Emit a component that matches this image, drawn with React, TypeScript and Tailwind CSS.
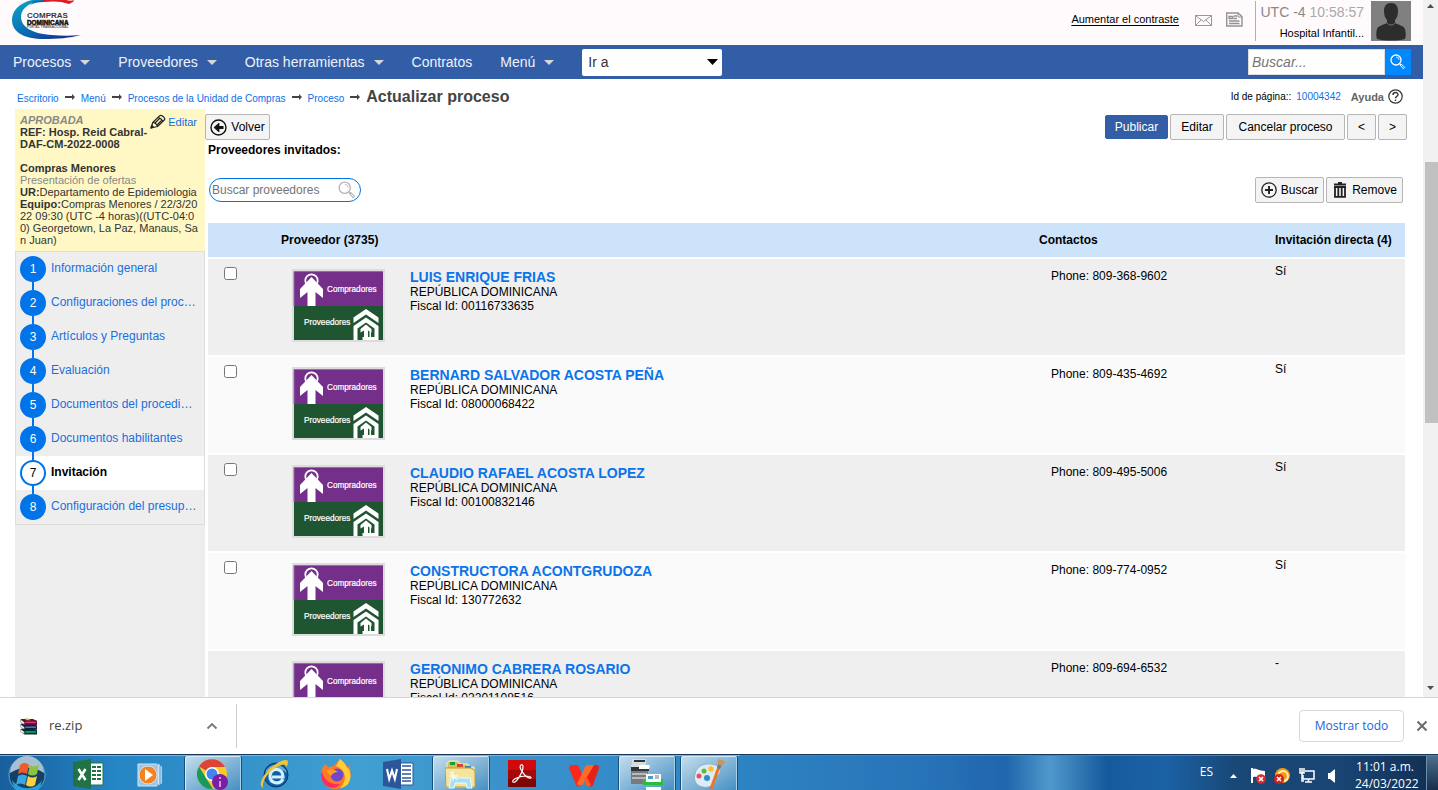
import React, { useState } from "react";
import type { ReactNode } from "react";

const steps = [
  "Información general",
  "Configuraciones del proc…",
  "Artículos y Preguntas",
  "Evaluación",
  "Documentos del procedi…",
  "Documentos habilitantes",
  "Invitación",
  "Configuración del presup…",
];

const suppliers = [
  { name: "LUIS ENRIQUE FRIAS", id: "00116733635", phone: "809-368-9602", direct: true },
  { name: "BERNARD SALVADOR ACOSTA PEÑA", id: "08000068422", phone: "809-435-4692", direct: true },
  { name: "CLAUDIO RAFAEL ACOSTA LOPEZ", id: "00100832146", phone: "809-495-5006", direct: true },
  { name: "CONSTRUCTORA ACONTGRUDOZA", id: "130772632", phone: "809-774-0952", direct: true },
  { name: "GERONIMO CABRERA ROSARIO", id: "02201108516", phone: "809-694-6532", direct: false },
];

const crumbs = ["Escritorio", "Menú", "Procesos de la Unidad de Compras", "Proceso"];

function Logo() {
  return (
    <svg width="70" height="40" viewBox="0 0 70 40" role="img" aria-label="Compras Dominicana">
      <defs>
        <linearGradient id="swoosh" x1="0" y1="0" x2="1" y2="1">
          <stop offset="0" stopColor="#0aa9cb" />
          <stop offset="0.55" stopColor="#0a66b0" />
          <stop offset="1" stopColor="#1b1c7c" />
        </linearGradient>
      </defs>
      <path d="M20 0C7 3 0 11 0 20c0 12 12 19 32 19 14 0 25-1 37-4-10 1-20 1-29 0C21 34 9 27 9 17 9 10 14 4 29 0Z" fill="url(#swoosh)" />
      <path d="M21 2C25 0 29 0 32 0v2c-6 0-11 1-14 3Z" fill="#0b66ab" />
      <path d="M32 0h22c3 1 6 1 8 0l-1 2-4 2C49 1 40 1 32 2Z" fill="#e01b22" />
      <text x="15" y="18" fontSize="8" fontWeight="700" fill="#38383c" fontFamily="Liberation Sans, sans-serif">COMPRAS</text>
      <text x="15" y="24.500" fontSize="6.4" fontWeight="900" fill="#141416" stroke="#141416" strokeWidth="0.5" fontFamily="Liberation Sans, sans-serif">DOMINICANA</text>
      <text x="15" y="28" fontSize="3.2" fontWeight="700" fill="#555" fontFamily="Liberation Sans, sans-serif">PORTAL TRANSACCIONAL</text>
    </svg>
  );
}

function Caret() {
  return (
    <svg width="10" height="5" viewBox="0 0 10 5" aria-hidden="true">
      <path d="M0 0h10L5 5Z" fill="#d6d6d6" />
    </svg>
  );
}

function Arrow() {
  return (
    <svg width="10" height="6" viewBox="0 0 10 6" aria-hidden="true">
      <path d="M0 2h7V0l3 3-3 3V4H0Z" fill="#444" />
    </svg>
  );
}

function Magnifier({ color, size }: { color: string; size: number }) {
  return (
    <svg width={size} height={size} viewBox="0 0 16 16" className="shrink-0" fill="none" stroke={color} aria-hidden="true">
      <circle cx="6" cy="6" r="5" strokeWidth="1.3" />
      <path d="M6 3a3 3 0 0 1 3 3" strokeWidth="0.8" />
      <path d="m9.6 9.6 1.6 1.600" strokeWidth="1.2" />
      <path d="m11.200 10.200 3.600 3.200-1.400 1.400-3.200-3.600Z" strokeWidth="1" strokeLinejoin="round" />
    </svg>
  );
}

function ProviderImage() {
  return (
    <svg width="93" height="73" viewBox="0 0 93 73" className="shrink-0" aria-hidden="true">
      <rect width="93" height="73" fill="#dcdcdc" />
      <rect x="2" y="2" width="89" height="35" fill="#742f8a" />
      <rect x="2" y="37" width="89" height="34" fill="#1f5631" />
      <path d="M2 37V2.500H91" fill="none" stroke="#9a67ab" />
      <circle cx="19.500" cy="11.500" r="6.200" fill="none" stroke="#fff" strokeWidth="1.800" />
      <path d="M19.500 8 31 20v9l-7.500-6V37h-8V23L8 29v-9Z" fill="#fff" />
      <path d="M61.500 48.500 74 40l12.500 8.500V54L74 45.500 61.500 54Z" fill="#fff" />
      <path d="M61.500 71V57L74 48.500 86.500 57v14Z" fill="#fff" />
      <path d="M65.500 71V59.500L74 53.500l8.500 6V68H79v-7h-1.500v7H76v3h-3.500v-3h-2v3Z" fill="#1f5631" />
      <path d="M74 55.500 79.500 60v3.500L76 61.500V71h-4v-9.500l-3.500 2V60Z" fill="#fff" />
      <text x="35" y="23" fontSize="8.200" fill="#fff" stroke="#fff" strokeWidth="0.200" fontFamily="Liberation Sans, sans-serif">Compradores</text>
      <text x="12" y="56" fontSize="8.200" fill="#fff" stroke="#fff" strokeWidth="0.200" fontFamily="Liberation Sans, sans-serif">Proveedores</text>
    </svg>
  );
}

function ActionButton({ children, primary, className = "" }: { children: ReactNode; primary?: boolean; className?: string }) {
  const tone = primary
    ? "border-[#325ea8] bg-[#325ea8] text-white h-6"
    : "border-[#b5b5b5] bg-[#f4f4f4] text-black h-[26px]";
  return (
    <button type="button" className={`flex items-center justify-center gap-1 rounded-xs border text-xs ${tone} ${className}`}>
      {children}
    </button>
  );
}

function Header() {
  return (
    <header className="flex h-[45px] shrink-0 items-start justify-between bg-[#fffafc] pr-3 pl-3">
      <Logo />
      <div className="flex items-start">
        <a href="#contraste" className="mt-[11px] text-[11px] leading-4 text-black underline underline-offset-2">Aumentar el contraste</a>
        <svg className="mt-[15px] ml-4" width="17" height="11" viewBox="0 0 17 11" fill="none" stroke="#999" role="img" aria-label="Mensajes">
          <rect x=".5" y=".5" width="16" height="10" />
          <path d="m1 1 7.500 5.500L16 1M1 10l5-5M16 10l-5-5" />
        </svg>
        <svg className="mt-3 ml-[14px]" width="17" height="15" viewBox="0 0 17 15" fill="none" stroke="#929292" role="img" aria-label="Noticias">
          <path d="M.7 1h11.300l4 3.500V14H.7Z" strokeWidth="1.400" />
          <path d="M12 1v4h4" />
          <path d="M3 4.500h4v2H3ZM8 4h3M8 6.500h3M3 9h10.500M3 11.500h10.500" strokeWidth="1.300" />
        </svg>
        <div className="mt-px ml-3 h-10 w-[116px] border-l border-[#b0b0b0] pr-[7px] text-right">
          <div className="text-sm leading-[22px] text-[#aaa]"><span className="text-[#888]">UTC -4</span> 10:58:57</div>
          <div className="text-[11px] leading-5 text-black">Hospital Infantil...</div>
        </div>
        <svg className="mt-px" width="40" height="40" viewBox="0 0 40 40" role="img" aria-label="Usuario">
          <rect width="40" height="40" fill="#808080" />
          <path d="M20 2c5 0 7 3.500 7 8 0 4-1 7-3 9v3c4 2 9 3 10 6 1 4 1 7 0 10-8 2-20 2-28 0-1-3-1-6 0-10 1-3 6-4 10-6v-3c-2-2-3-5-3-9 0-4.500 2-8 7-8Z" fill="#2d2d2d" />
          <path d="M15 21c3 4 7 4 10 0" fill="none" stroke="#777" />
        </svg>
      </div>
    </header>
  );
}

function NavItem({ label, menu }: { label: string; menu?: boolean }) {
  return (
    <button type="button" className="flex items-center gap-[9px] text-sm leading-5 text-[#eef2f8]">
      {label}
      {menu && <Caret />}
    </button>
  );
}

function Nav() {
  return (
    <nav className="flex h-[34px] shrink-0 items-center justify-between bg-[#325ea8] pr-3 pl-[13px]">
      <div className="flex items-center gap-7">
        <NavItem label="Procesos" menu />
        <NavItem label="Proveedores" menu />
        <NavItem label="Otras herramientas" menu />
        <NavItem label="Contratos" />
        <NavItem label="Menú" menu />
        <div className="relative flex items-center">
          <select aria-label="Ir a" className="h-[27px] w-[140px] appearance-none rounded-xs bg-white px-[6px] text-sm text-[#333]">
            <option>Ir a</option>
          </select>
          <svg className="pointer-events-none absolute right-1" width="11" height="6" viewBox="0 0 11 6" aria-hidden="true">
            <path d="M0 0h11L5.500 6Z" />
          </svg>
        </div>
      </div>
      <form className="flex" onSubmit={(e) => e.preventDefault()}>
        <input aria-label="Buscar" placeholder="Buscar..." className="h-[26px] w-[137px] border border-[#ddd] bg-white px-[3px] text-sm italic placeholder:text-[#757575]" />
        <button type="submit" aria-label="Buscar" className="flex h-[26px] w-[26px] items-center justify-center bg-[#0088ff]">
          <Magnifier color="#fff" size={16} />
        </button>
      </form>
    </nav>
  );
}

function Breadcrumb() {
  return (
    <div className="flex h-[30px] shrink-0 items-center justify-between pt-[5px] pr-5 pl-[17px]">
      <div className="flex items-center gap-[6px]">
        {crumbs.map((c) => (
          <React.Fragment key={c}>
            <a href="#ruta" className="pt-1 text-[10px] leading-4 text-[#0b6fe8]">{c}</a>
            <Arrow />
          </React.Fragment>
        ))}
        <h1 className="text-base leading-5 font-bold text-[#444]">Actualizar proceso</h1>
      </div>
      <div className="flex items-center text-[10px] leading-4 text-black">
        <span>Id de página::</span>
        <a href="#pagina" className="ml-[5px] text-[#0b6fe8]">10004342</a>
        <a href="#ayuda" className="ml-[10px] flex items-center gap-1 text-[11px] font-bold text-[#666]">
          Ayuda
          <svg width="15" height="15" viewBox="0 0 15 15" fill="none" stroke="#333" aria-hidden="true">
            <circle cx="7.500" cy="7.500" r="6.700" strokeWidth="1.200" />
            <path d="M5 6c0-3.300 5-3.200 5-.5 0 2-2.500 1.800-2.500 3.800M7.500 10.500V12" strokeWidth="1.400" />
          </svg>
        </a>
      </div>
    </div>
  );
}

function Sidebar() {
  return (
    <aside className="w-[190px] shrink-0 bg-[#eee]">
      <div className="h-[142px] bg-[#fff8c4] px-[5px] pt-[5px] text-[11px] leading-3 text-[#333]">
        <a href="#editar" className="float-right mr-[3px] flex items-center gap-[2px] text-[#0b6fe8]">
          <svg width="16" height="15" viewBox="0 0 16 15" fill="none" stroke="#222" strokeWidth="1.200" strokeLinejoin="round" aria-hidden="true">
            <path d="m1 14 1.800-5.500L9.500 1.800c1.500-1.500 6.500 2.200 5 4L7.500 12.500Z" />
            <path d="M2.800 8.500c2 0 4.500 2 4.700 4M8 3.500c2 .2 4.500 2.300 4.700 4.300M5 9l5-5M7 11l5-5" />
            <path d="m1 14 .8-2.500 1.700 1.700Z" fill="#222" />
          </svg>
          Editar
        </a>
        <div className="font-bold text-[#888] italic">APROBADA</div>
        <div className="font-bold">REF: Hosp. Reid Cabral-<br />DAF-CM-2022-0008</div>
        <div className="mt-3 font-bold">Compras Menores</div>
        <div className="text-[#888]">Presentación de ofertas</div>
        <div className="whitespace-nowrap"><b>UR:</b>Departamento de Epidemiologia</div>
        <div className="whitespace-nowrap"><b>Equipo:</b>Compras Menores / 22/3/20<br />22 09:30 (UTC -4 horas)((UTC-04:0<br />0) Georgetown, La Paz, Manaus, Sa<br />n Juan)</div>
      </div>
      <ol className="border border-[#ddd]">
        {steps.map((label, i) => {
          const current = i === 6;
          return (
            <li key={label} className={`flex h-[34px] pl-1 ${current ? "bg-white" : ""}`}>
              <div className="flex w-[26px] shrink-0 flex-col items-center">
                <div className={`h-1 w-[2px] ${i === 0 ? "" : "bg-[#0074e8]"}`} />
                <div className={`flex size-[26px] shrink-0 items-center justify-center rounded-full border-2 border-[#0074e8] text-xs ${current ? "bg-white text-black" : "bg-[#0074e8] text-white"}`}>
                  {i + 1}
                </div>
                <div className={`w-[2px] flex-1 ${i === steps.length - 1 ? "" : "bg-[#0074e8]"}`} />
              </div>
              <a href="#paso" className={`ml-[5px] pt-2 text-xs leading-4 whitespace-nowrap ${current ? "font-bold text-black" : "text-[#1a6fe0]"}`}>
                {label}
              </a>
            </li>
          );
        })}
      </ol>
    </aside>
  );
}

function Suppliers() {
  const [checked, setChecked] = useState<string[]>([]);
  const toggle = (id: string) => setChecked((c) => (c.includes(id) ? c.filter((x) => x !== id) : [...c, id]));
  return (
    <table className="w-full table-fixed border-separate border-spacing-x-0 border-spacing-y-[2px] text-left text-xs text-black">
      <colgroup>
        <col className="w-[73px]" />
        <col />
        <col className="w-[236px]" />
        <col className="w-[130px]" />
      </colgroup>
      <thead>
        <tr className="h-[34px] bg-[#cde3fa]">
          <td />
          <th scope="col">Proveedor (3735)</th>
          <th scope="col">Contactos</th>
          <th scope="col" className="whitespace-nowrap">Invitación directa (4)</th>
        </tr>
      </thead>
      <tbody>
        {suppliers.map((s) => (
          <tr key={s.id} className="h-24 align-top odd:bg-[#efefef] even:bg-[#fafafa]">
            <td className="pt-2 pl-4">
              {s.direct && (
                <input type="checkbox" aria-label={s.name} checked={checked.includes(s.id)} onChange={() => toggle(s.id)} className="block size-[13px]" />
              )}
            </td>
            <td className="pt-[10px] pl-[11px]">
              <div className="flex gap-[25px]">
                <ProviderImage />
                <div className="leading-[14px]">
                  <a href="#proveedor" className="block text-sm leading-4 font-bold text-[#0b74ea]">{s.name}</a>
                  <div>REPÚBLICA DOMINICANA</div>
                  <div>Fiscal Id: {s.id}</div>
                </div>
              </div>
            </td>
            <td className="pt-[9px] pl-3 leading-4">Phone: {s.phone}</td>
            <td className="pt-1 leading-4">{s.direct ? "Sí" : "-"}</td>
          </tr>
        ))}
      </tbody>
    </table>
  );
}

function Content() {
  return (
    <main className="min-w-0 flex-1 pr-[18px]">
      <div className="flex items-start justify-between pt-[5px]">
        <ActionButton className="w-[65px]">
          <svg width="17" height="17" viewBox="0 0 17 17" fill="none" stroke="#111" aria-hidden="true">
            <circle cx="8.500" cy="8.500" r="7.500" strokeWidth="1.400" />
            <path d="M13.500 8.500H6" strokeWidth="3" />
            <path d="m9 4-5 4.500L9 13Z" fill="#111" strokeWidth=".8" />
          </svg>
          Volver
        </ActionButton>
        <div className="-mr-[2px] flex items-center gap-[2px]">
          <ActionButton primary className="w-[63px]">Publicar</ActionButton>
          <ActionButton className="w-[54px]">Editar</ActionButton>
          <ActionButton className="w-[119px]">Cancelar proceso</ActionButton>
          <ActionButton className="w-[29px]">&lt;</ActionButton>
          <ActionButton className="w-[29px]">&gt;</ActionButton>
        </div>
      </div>
      <div className="pl-[3px]">
        <h2 className="pt-[2px] text-xs leading-4 font-bold text-black">Proveedores invitados:</h2>
        <div className="flex items-center justify-between pt-[19px] pr-[2px] pb-[18px]">
          <div className="ml-px flex h-6 w-[152px] items-center rounded-full border border-[#0074e8] bg-white pr-1">
            <input aria-label="Buscar proveedores" placeholder="Buscar proveedores" className="w-full min-w-0 bg-transparent pl-[2px] text-xs outline-none placeholder:text-[#757575]" />
            <Magnifier color="#b8b8b8" size={18} />
          </div>
          <div className="flex gap-[2px]">
            <ActionButton className="w-[69px]">
              <svg width="16" height="16" viewBox="0 0 16 16" fill="none" stroke="#222" aria-hidden="true">
                <circle cx="8" cy="8" r="7.200" strokeWidth="1.300" />
                <path d="M8 4v8M4 8h8" strokeWidth="1.900" />
              </svg>
              Buscar
            </ActionButton>
            <ActionButton className="w-[77px]">
              <svg width="16" height="16" viewBox="0 0 16 16" fill="none" stroke="#222" aria-hidden="true">
                <path d="M2 2.500h12M6 1h4" strokeWidth="2" />
                <path d="M3 4.500v10.300h10V4.500M6.300 5v9M9.700 5v9M2 5h12" strokeWidth="1.800" />
              </svg>
              Remove
            </ActionButton>
          </div>
        </div>
        <Suppliers />
      </div>
    </main>
  );
}

function Scrollbar() {
  return (
    <div className="flex w-[15px] shrink-0 flex-col items-center bg-[#f1f1f1]" aria-hidden="true">
      <svg className="mt-1" width="7" height="4" viewBox="0 0 7 4"><path d="M0 4h7L3.500 0Z" fill="#505050" /></svg>
      <div className="mt-[154px] ml-[2px] h-[261px] w-[13px] bg-[#c1c1c1]" />
      <svg className="mt-auto mb-[7px]" width="7" height="4" viewBox="0 0 7 4"><path d="M0 0h7L3.500 4Z" fill="#505050" /></svg>
    </div>
  );
}

function Book({ y, dark, light }: { y: number; dark: string; light: string }) {
  return (
    <g>
      <path d={`M1 ${y}h11l4 1.500v4H4L1 ${y + 3}Z`} fill={dark} />
      <path d={`M5 ${y + 2.500}h10v1.300H5Z`} fill={light} />
      <path d={`M.5 ${y + 0.500}v2.500l3.500 2V${y + 3}Z`} fill="#fff" stroke="#555" strokeWidth=".4" />
    </g>
  );
}

function DownloadBar() {
  return (
    <div className="flex h-[57px] shrink-0 items-center border-t border-[#d5d5d5] bg-white pr-[10px] font-['Open_Sans',sans-serif]">
      <div className="flex h-11 w-[237px] items-center border-r border-[#ccc] pr-[18px] pl-5 text-[13px] text-[#444]">
        <svg width="17" height="17" viewBox="0 0 16 16" aria-hidden="true">
          <Book y={10} dark="#04302a" light="#1fb183" />
          <Book y={5.5} dark="#0c1f44" light="#2f8fd6" />
          <Book y={1} dark="#6b0a2c" light="#d0408a" />
          <path d="M4 .5h4l2 1.500H6Z" fill="#d9b02c" />
        </svg>
        <span className="ml-3">re.zip</span>
        <button type="button" aria-label="Opciones de descarga" className="ml-auto">
          <svg width="12" height="8" viewBox="0 0 12 8" fill="none" stroke="#777" strokeWidth="1.800"><path d="m1.500 6.500 4.500-4.500 4.500 4.500" /></svg>
        </button>
      </div>
      <button type="button" className="ml-auto h-8 w-[105px] rounded border border-[#d5d8dc] text-xs font-medium text-[#1a62e0]">Mostrar todo</button>
      <button type="button" aria-label="Cerrar" className="ml-3">
        <svg width="12" height="12" viewBox="0 0 12 12" stroke="#6b6b6b" strokeWidth="2"><path d="m1.500 1.500 9 9m0-9-9 9" /></svg>
      </button>
    </div>
  );
}

function TaskIcon({ name }: { name: string }) {
  switch (name) {
    case "Excel":
      return (
        <g>
          <path d="M16 4h14v22H16Z" fill="#fff" stroke="#217346" />
          <path d="M19 7h4v2h-4Zm5 0h4v2h-4Zm-5 4h4v2h-4Zm5 0h4v2h-4Zm-5 4h4v2h-4Zm5 0h4v2h-4Zm-5 4h4v2h-4Zm5 0h4v2h-4Z" fill="#217346" />
          <path d="m0 3 18-3v30L0 27Z" fill="#217346" />
          <path d="m5.500 10 7 11m0-11-7 11" stroke="#fff" strokeWidth="2.600" />
        </g>
      );
    case "Reproductor":
      return (
        <g>
          <path d="M3 5h19v22H3Z" fill="#9fc6e4" stroke="#d1e5f2" />
          <path d="M22 5h3v21h-3ZM25 7h2v18h-2Z" fill="#cfe4f4" stroke="#5597c9" strokeWidth=".6" />
          <circle cx="13" cy="16" r="9" fill="#f58220" stroke="#d8e2e7" />
          <path d="m10 10 8 6-8 6Z" fill="#fff" />
        </g>
      );
    case "Chrome":
      return (
        <g>
          <circle cx="15" cy="15" r="15" fill="#fbc72e" />
          <path d="M15 15 2 7.500A15 15 0 0 1 28 8H15Z" fill="#db4437" />
          <path d="M2 7.500 9 19l7 11A15 15 0 0 1 2 7.500Z" fill="#169b5b" />
          <circle cx="15" cy="15" r="7" fill="#fff" />
          <circle cx="15" cy="15" r="5.500" fill="#4385f4" />
          <circle cx="23" cy="23" r="8" fill="#7b1fa2" />
          <path d="M23 18v2m0 2v6" stroke="#d9a4ee" strokeWidth="1.800" />
        </g>
      );
    case "Internet Explorer":
      return (
        <g>
          <circle cx="17" cy="16" r="12" fill="#0f5fa8" stroke="#0a355f" />
          <path d="M6 14a11.500 11.500 0 0 1 22 0c-7-5-15-5-22 0Z" fill="#5fa9d8" />
          <path d="M24 20c-3 6-13 5-13-3 0-9 13-9 13 1H13" fill="none" stroke="#d3effc" strokeWidth="3.200" />
          <path d="M4 29C-2 26 5 14 14 7 22 1 29-1 29 3c0 2-1 4-2 5 0-4-4-3-11 1C8 15 3 22 4 29Z" fill="#f4c32d" />
        </g>
      );
    case "Firefox":
      return (
        <g>
          <path d="M19 0c6 4 6 7 8 8l1-2c4 12 1 23-12 24C5 31-1 22 0 13c1-4 3-6 4-8l3 3 6-1c2-3 4-5 6-7Z" fill="#ff7a24" />
          <path d="M19 0c7 5 5 8 9 10 4 11-1 18-9 19 8-8 6-18-4-22 2-3 3-5 4-7Z" fill="#ffcf36" />
          <path d="M1 12c2 10 9 14 18 13-3 6-18 6-19-9Z" fill="#f72e61" />
          <circle cx="16" cy="16" r="6.500" fill="#7048cc" />
          <path d="M5 12c4-3 9-2 12 1-3 0-5 1-7 4Z" fill="#ff9b28" />
        </g>
      );
    case "Word":
      return (
        <g>
          <path d="M16 4h14v22H16Z" fill="#fff" stroke="#2b579a" />
          <path d="M19 7h9m-9 4h9m-9 4h9m-9 4h9m-9 3h9" stroke="#2b579a" strokeWidth="1.500" />
          <path d="m0 3 18-3v30L0 27Z" fill="#2b579a" />
          <path d="m4 10 2.200 10L9 11.500 11.800 20 14 10" fill="none" stroke="#fff" strokeWidth="2.100" />
        </g>
      );
    case "Explorador de archivos":
      return (
        <g>
          <path d="M2 4 4 2h9l2 3h8l2 3h4v20H1Z" fill="#dcbf5c" stroke="#fff3b4" />
          <path d="M5 3h5v3H5Z" fill="#1a9a39" />
          <path d="M12 5h6v3h-6Z" fill="#cf4c31" />
          <path d="M20 7h6v3h-6Z" fill="#3186cc" />
          <path d="M0 9h26l4 3v16H1Z" fill="#f5e49d" stroke="#bc9a3c" />
          <path d="M4 29 6 19h19l2 10h-5l-1-5H10l-1 5Z" fill="#a7e0f3" stroke="#e8fcff" />
          <path d="M8 12v10M4 17h9m-8-4 7 8" stroke="#fff" />
        </g>
      );
    case "Acrobat":
      return (
        <g>
          <path d="M1 1h28v27H1Z" fill="#cf090c" />
          <path d="M1 11h28v17H1Z" fill="#a80709" />
          <path d="M1 20h28v8H1Z" fill="#7c0506" />
          <path d="M14 6c-3 2 3 11 8 13 3 1 3-2-3-2-7 0-15 4-13 6 3 2 10-10 10-15 0-2-1-3-2-2Z" fill="none" stroke="#fff" strokeWidth="1.200" />
        </g>
      );
    case "WPS":
      return (
        <g>
          <path d="M0 9c0-2 1-3 3-3h6l6 14-3 6c-1 2-4 2-5 0Z" fill="#f92a1c" />
          <path d="M30 9c0-2-1-3-3-3h-4l-7 13 3 7c1 2 4 2 5 0Z" fill="#e8201a" />
          <path d="M16 8c1-2 2-2 4-2h5L14 25c-1 2-4 2-6 0Z" fill="#ff6a2a" />
          <path d="m17 17 5 9c-2 2-4 2-5 0l-2-5Z" fill="#ff5a24" />
        </g>
      );
    case "Impresora":
      return (
        <g>
          <path d="M0 10h17v15H0Z" fill="#777b7e" />
          <path d="M1 0h14v6H1Zm-1 6h19v3H0Z" fill="#d9dcde" />
          <path d="M3 1h11v2H3Zm-3 7h18v4H0Z" fill="#303539" />
          <path d="M1 14h15v2H1Zm0 4h15v2H1Z" fill="#b7b9ba" />
          <path d="M8 6h10v4H8Z" fill="#fff" />
          <path d="M12 20h20v6H12Z" fill="#26bf3d" />
          <path d="M15 15h15v8H15Zm0 13h15v3H15Z" fill="#f8ffff" />
          <path d="M17 17h5v3h-5Z" fill="#5199cc" />
          <path d="M24 17h4m-4 2h4" stroke="#777" />
        </g>
      );
    default:
      return (
        <g>
          <path d="M2 15C3 8 10 4 18 5c11 1 11 9 6 12-3 2 0 5-3 8-4 5-15 4-18-1-2-3-2-6-1-9Z" fill="#dcebf5" stroke="#91aebe" />
          <circle cx="6" cy="17" r="2.500" fill="#e65259" />
          <circle cx="11" cy="12" r="2.500" fill="#61ba35" />
          <circle cx="18" cy="10" r="2.700" fill="#ffc125" />
          <circle cx="14" cy="19" r="3" fill="#328bc5" />
          <path d="M27 5 18 30" stroke="#e97528" strokeWidth="3" />
          <path d="m26 4 3 1-2 5-3-1Z" fill="#6e798c" />
          <path d="M25 4C24 2 26 1 25 0c3 1 5 0 7 3-1 3-4 4-6 3Z" fill="#c89760" />
        </g>
      );
  }
}

const tasks = ["Excel", "Reproductor", "Chrome", "Internet Explorer", "Firefox", "Word", "Explorador de archivos", "Acrobat", "WPS", "Impresora", "Paint"];
const openTasks = ["Chrome", "Explorador de archivos", "Impresora", "Paint"];

function Taskbar() {
  return (
    <footer className="flex h-9 shrink-0 border-t border-[#16385f] bg-[linear-gradient(90deg,#185e9c_0%,#2586c5_8%,#318fc9_14%,#419fd1_25%,#3b92ca_35%,#2e85c4_50%,#2874b8_64%,#2066ac_70%,#4f98cc_73%,#155a9c_77%,#1b62a5_81%,#194776_86%,#194574_93%,#122e50_100%)] font-['Open_Sans',sans-serif] text-white">
      <button type="button" aria-label="Inicio" className="w-[58px] overflow-hidden border-t border-[#78b3dc] pl-2">
        <svg width="38" height="36" viewBox="0 0 38 36">
          <circle cx="19" cy="19" r="18" fill="#153f69" stroke="#65a7d2" />
          <path d="M2 17a17 17 0 0 1 34 0C26 10 13 10 2 17Z" fill="#a6bfd2" />
          <path d="M4 24c8 11 23 11 30 0l-2 8c-7 7-19 7-26 0Z" fill="#20a3d8" />
          <path d="M12 9c4-3 7-2 9 0l-2 9c-3-2-6-2-9 0Z" fill="#f15a29" />
          <path d="M22 9c3 2 6 2 9-1l-2 10c-3 2-6 2-9 0Z" fill="#8bc540" />
          <path d="M10 20c3-2 6-2 9 0l-2 9c-3-2-6-2-9 0Z" fill="#3ba5df" />
          <path d="M20 20c3 2 6 2 9 0l-2 9c-3 2-6 2-9 0Z" fill="#ffd13b" />
        </svg>
      </button>
      {tasks.map((name) => (
        <div key={name} className="w-[62px] shrink-0 border-t border-[#78b3dc] px-[2px]">
          <button
            type="button"
            aria-label={name}
            className={`flex h-[34px] w-full justify-center overflow-hidden pt-[3px] ${openTasks.includes(name) ? "rounded-t-xs border-x border-[#174f7c] bg-linear-to-br from-[#c5dfee] to-[#438fc1] shadow-[inset_1px_1px_0_#d7eaf3,inset_-1px_0_0_#acd1e7]" : ""}`}
          >
            <svg width="32" height="31" viewBox="0 0 32 31" fill="none"><TaskIcon name={name} /></svg>
          </button>
        </div>
      ))}
      <div className="flex min-w-0 flex-1 items-start justify-end border-t border-[#4c80b2]">
        <span className="mt-2 mr-[17px] text-xs leading-4">ES</span>
        <svg className="mt-[18px] mr-[13px]" width="7" height="4" viewBox="0 0 7 4" aria-hidden="true"><path d="M0 4h7L3.500 0Z" fill="#fff" /></svg>
        <svg className="mt-3 mr-2" width="16" height="16" viewBox="0 0 16 16" role="img" aria-label="Centro de actividades">
          <path d="M1 0h2v15H1Z" fill="#fff" />
          <path d="M3 1c4-1 5 2 12 2v7c-6 0-8-2-12-1Z" fill="#fff" />
          <circle cx="11" cy="11" r="4.800" fill="#d62e2e" />
          <path d="m9 9 4 4m0-4-4 4" stroke="#fff" strokeWidth="1.600" />
        </svg>
        <svg className="mt-3 mr-[9px]" width="16" height="16" viewBox="0 0 16 16" role="img" aria-label="Antivirus">
          <circle cx="8.500" cy="7.500" r="7.500" fill="#f79a0b" />
          <path d="M4 9a5 5 0 1 1 6 4" fill="none" stroke="#fff0c3" strokeWidth="2" />
          <circle cx="5" cy="11" r="5" fill="#d0211c" />
          <path d="m3 9 4 4m0-4-4 4" stroke="#fff" strokeWidth="1.600" />
        </svg>
        <svg className="mt-3 mr-[13px]" width="16" height="16" viewBox="0 0 16 16" fill="none" stroke="#fff" role="img" aria-label="Red">
          <path d="M6 3h9v8H4V7" strokeWidth="1.500" />
          <path d="M6 14h7M9.500 11v3M1 0v5h4V0M3 0v13h2" strokeWidth="1.500" />
        </svg>
        <svg className="mt-3 mr-5" width="7" height="16" viewBox="0 0 7 16" role="img" aria-label="Volumen">
          <path d="M0 5h2l5-4v14l-5-4H0Z" fill="#fff" />
        </svg>
        <div className="mr-[11px] w-[60px] pt-[2px] text-center text-xs leading-[17px] whitespace-nowrap">11:01 a.m.<br />24/03/2022</div>
        <div className="h-full w-3 border-l border-[#6d8daf] bg-linear-to-b from-[#4d6e8e] to-[#172f4c]" />
      </div>
    </footer>
  );
}

export default function App() {
  return (
    <div className="flex h-screen flex-col overflow-hidden bg-white font-['Liberation_Sans',Arial,sans-serif]">
      <div className="flex min-h-0 flex-1">
        <div className="flex min-w-0 flex-1 flex-col overflow-hidden">
          <Header />
          <Nav />
          <Breadcrumb />
          <div className="flex min-h-0 flex-1 pl-[15px]">
            <Sidebar />
            <Content />
          </div>
        </div>
        <Scrollbar />
      </div>
      <DownloadBar />
      <Taskbar />
    </div>
  );
}
